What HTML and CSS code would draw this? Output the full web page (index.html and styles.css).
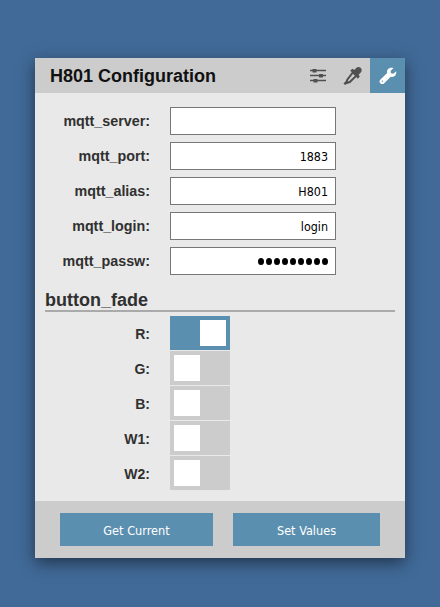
FILE: index.html
```html
<!DOCTYPE html>
<html lang="en">
<head>
<meta charset="utf-8">
<title>H801 Configuration</title>
<link rel="stylesheet" href="styles.css">
</head>
<body>
<main class="card">
  <header class="header">
    <h1 class="title">H801 Configuration</h1>
    <nav class="tabs">
      <a class="tab" aria-label="Sliders"><svg width="35" height="35" viewBox="0 0 35 35"><path d="M10 12.5h16M10 17.5h16M10 22.5h16" stroke="#505050" stroke-width="1.3"/><path d="M12.5 11h4v3.4h-4zM19 16h4v3.4h-4zM13.5 21h4v3.4h-4z" fill="#505050"/></svg></a>
      <a class="tab" aria-label="Color"><svg width="35" height="35" viewBox="0 0 35 35"><path d="M18 14.2l3.4 3.4-6.6 6.4-3.4 1 .9-3.4z" fill="none" stroke="#505050" stroke-width="2"/><path d="M15.2 12.5l2.3-1.8 1.7 1.2 2-2c3.2-2.6 7.4 1.4 4.6 4.7l-2.2 2.1 1.2 1.9-2 2.2z" fill="#505050"/><path d="M9.3 26.3l2.4-2.6" stroke="#505050" stroke-width="2.2"/></svg></a>
      <a class="tab active" aria-label="Settings"><svg width="35" height="35" viewBox="0 0 35 35"><path d="M23.5 10.1l-2.9 2.9.4 2.3 2.4.5 2.7-2.5c.8 3.7-2 6.3-5.4 5.4l-6.7 6.7c-2.7 2-5.8-1-3.8-3.6l7-6.9c-.9-3.4 2.2-6.3 6.3-4.8z" fill="#fff"/><circle cx="12.3" cy="23.3" r=".7" fill="#5b8fb0"/></svg></a>
    </nav>
  </header>
  <form class="content">
    <label class="row"><span class="label">mqtt_server:</span><input class="field" type="text"></label>
    <label class="row"><span class="label">mqtt_port:</span><input class="field" type="text" value="1883"></label>
    <label class="row"><span class="label">mqtt_alias:</span><input class="field" type="text" value="H801"></label>
    <label class="row"><span class="label">mqtt_login:</span><input class="field" type="text" value="login"></label>
    <div class="row"><span class="label">mqtt_passw:</span><div class="field password"><i></i><i></i><i></i><i></i><i></i><i></i><i></i><i></i><i></i></div></div>
    <h2 class="section">button_fade</h2>
    <div class="row"><span class="label short">R:</span><span class="toggle on"></span></div>
    <div class="row"><span class="label short">G:</span><span class="toggle"></span></div>
    <div class="row"><span class="label short">B:</span><span class="toggle"></span></div>
    <div class="row"><span class="label short">W1:</span><span class="toggle"></span></div>
    <div class="row"><span class="label short">W2:</span><span class="toggle"></span></div>
  </form>
  <footer class="footer">
    <button class="button get">Get Current</button>
    <button class="button set">Set Values</button>
  </footer>
</main>
</body>
</html>
```

FILE: styles.css
```css
* { box-sizing: border-box; }
body {
  margin: 0;
  padding: 58px 35px 49px;
  background: #416a98;
  color: #303030;
  font-family: "Liberation Sans", Arial, sans-serif;
}
.card {
  height: 500px;
  display: flex;
  flex-direction: column;
  background: #e9e9e9;
  box-shadow: 0 5px 15px rgba(0, 0, 0, .5);
}
.header {
  display: flex;
  justify-content: space-between;
  height: 35px;
  background: #ccc;
}
.title {
  margin: 0 0 0 15px;
  color: #111;
  font-size: 18px;
  line-height: 36px;
}
.tabs { display: flex; }
.tab { width: 35px; height: 35px; }
.tab svg { display: block; }
.active { background: #5b8fb0; }
.content { flex: 1; padding: 10px 10px 0; }
.row { display: flex; align-items: center; height: 35px; }
.label {
  width: 105px;
  margin-right: 20px;
  text-align: right;
  font-size: 14.3px;
  font-weight: bold;
}
.short { padding-top: 2px; font-size: 14px; }
.field {
  width: 166px;
  height: 28px;
  padding: 2px 7px 0;
  border: 1px solid #777;
  border-radius: 0;
  background: #fff;
  color: #000;
  font: 12.4px "DejaVu Sans Condensed", "DejaVu Sans", sans-serif;
  text-align: right;
}
.password {
  display: flex;
  align-items: center;
  justify-content: flex-end;
  gap: 2px;
}
.password i { width: 6px; height: 7px; border-radius: 50%; background: #000; }
.section {
  height: 26px;
  margin: 8px 0 3px;
  border-bottom: 2px solid #aaa;
  font-size: 18px;
  line-height: 29px;
}
.toggle {
  display: flex;
  width: 60px;
  height: 34px;
  padding: 4px;
  background: #ccc;
}
.toggle::before { content: ""; width: 26px; height: 26px; background: #fff; }
.on { justify-content: flex-end; background: #5b8fb0; }
.footer {
  display: flex;
  gap: 20px;
  height: 57px;
  padding: 12px 25px;
  background: #ccc;
}
.button {
  height: 33px;
  padding: 2px 0 0;
  border: 0;
  background: #5b8fb0;
  color: #fff;
  font: 12.6px "DejaVu Sans Condensed", "DejaVu Sans", sans-serif;
}
.get { width: 153px; }
.set { width: 147px; }
```
